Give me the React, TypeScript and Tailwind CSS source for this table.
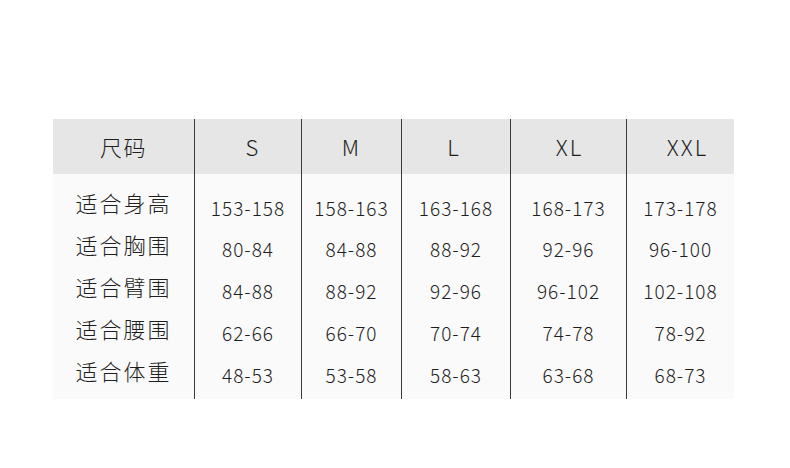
const sizes = ['S', 'M', 'L', 'XL', 'XXL']

const labels = ['适合身高', '适合胸围', '适合臂围', '适合腰围', '适合体重']

const data: string[][] = [
  ['153-158', '80-84', '84-88', '62-66', '48-53'],
  ['158-163', '84-88', '88-92', '66-70', '53-58'],
  ['163-168', '88-92', '92-96', '70-74', '58-63'],
  ['168-173', '92-96', '96-102', '74-78', '63-68'],
  ['173-178', '96-100', '102-108', '78-92', '68-73'],
]

// column widths incl. the left divider, and small nudges for the header letters
const widths = ['w-[107px]', 'w-[100px]', 'w-[109px]', 'w-[116px]', 'w-[108px]']
const headPad = ['pl-[10px]', 'pl-0', 'pr-[4px]', 'pl-[2px]', 'pl-[14px]']

const font = { fontFamily: '"Noto Sans CJK SC", "Noto Sans", sans-serif' }

function SizeColumn({ size, values, width, pad }: { size: string; values: string[]; width: string; pad: string }) {
  return (
    <div className={`flex flex-col border-l border-[#3a3a3a] ${width}`}>
      <div className={`flex h-[55px] items-center justify-center bg-[#e6e6e6] text-[22px] font-light tracking-[2px] text-[#1e1e1e] ${pad}`}>
        {size}
      </div>
      <div className="flex h-[225px] flex-col bg-[#fafafa] pt-[13px]">
        {values.map((v) => (
          <div key={v} className="flex h-[41.75px] items-center justify-center text-[19px] font-light tracking-[1px] text-[#1e1e1e]">
            {v}
          </div>
        ))}
      </div>
    </div>
  )
}

export default function App() {
  return (
    <div className="h-[468px] w-[790px] bg-white pl-[53px] pt-[119px]" style={font}>
      <div className="flex">
        <div className="flex w-[141px] flex-col">
          <div className="flex h-[55px] items-center justify-center bg-[#e6e6e6] text-[22px] font-light tracking-[1.5px] text-[#1e1e1e]">
            尺码
          </div>
          <div className="flex h-[225px] flex-col bg-[#fafafa] pt-[7px]">
            {labels.map((l) => (
              <div key={l} className="flex h-[42px] items-center justify-center text-[22px] font-light tracking-[2px] text-[#1e1e1e]">
                {l}
              </div>
            ))}
          </div>
        </div>
        {sizes.map((s, i) => (
          <SizeColumn key={s} size={s} values={data[i]} width={widths[i]} pad={headPad[i]} />
        ))}
      </div>
    </div>
  )
}
